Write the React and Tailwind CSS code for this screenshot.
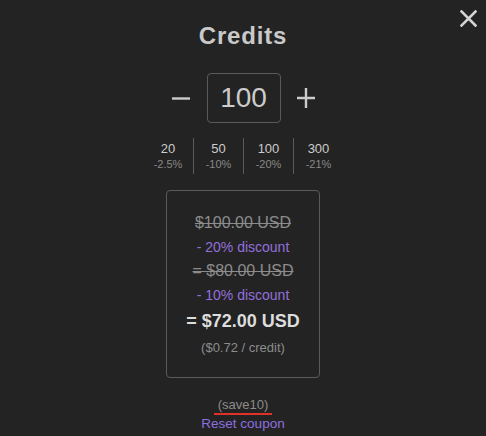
import React from "react";

const tiers = [
  { n: "20", p: "-2.5%" },
  { n: "50", p: "-10%" },
  { n: "100", p: "-20%" },
  { n: "300", p: "-21%" },
];

export default function App() {
  return (
    <div
      className="relative w-full h-[436px] bg-[#232323] flex flex-col items-center text-[#cccccc]"
      style={{ fontFamily: '"Liberation Sans", Arial, sans-serif' }}
    >
      <button className="absolute top-[10px] right-[9px] w-[17px] h-[17px]">
        <svg width="17" height="17" viewBox="0 0 17 17">
          <path d="M1.5 1.5 L15.5 15.5 M15.5 1.5 L1.5 15.5" stroke="#d4d4d4" strokeWidth="2.6" strokeLinecap="square" />
        </svg>
      </button>

      <div className="mt-[18px] h-[36px] leading-[36px] text-[24px] font-bold tracking-[0.8px] text-[#c9c9c9]">
        Credits
      </div>

      <div className="mt-[19px] flex items-center">
        <svg width="18" height="18" viewBox="0 0 18 18" className="mr-[17px]">
          <path d="M0 9.5 H18" stroke="#cccccc" strokeWidth="2.4" />
        </svg>
        <div className="w-[74px] h-[50px] border border-[#5a5a5a] rounded-[4px] flex items-center justify-center text-[28px] leading-none text-[#cccccc]">
          100
        </div>
        <svg width="18" height="20" viewBox="0 0 18 20" className="ml-[16px]">
          <path d="M0 10 H18 M9 0 V20" stroke="#cccccc" strokeWidth="2.4" />
        </svg>
      </div>

      <div className="mt-[15px] flex h-[36px]">
        {tiers.map((t, i) => (
          <div
            key={t.n}
            className={
              "w-[50px] h-full flex flex-col items-center justify-center " +
              (i > 0 ? "border-l border-[#5a5a5a]" : "")
            }
          >
            <div className="text-[13px] leading-[16px] text-[#cccccc]">{t.n}</div>
            <div className="text-[11px] leading-[14px] text-[#888888]">{t.p}</div>
          </div>
        ))}
      </div>

      <div className="mt-[16px] w-[154px] h-[188px] border border-[#5a5a5a] rounded-[4px] flex flex-col items-center pt-[20px]">
        <div className="h-[24px] leading-[24px] text-[16px] text-[#8c8c8c] line-through">$100.00 USD</div>
        <div className="h-[24px] leading-[24px] text-[14px] text-[#9370db]">- 20% discount</div>
        <div className="h-[24px] leading-[24px] text-[16px] text-[#8c8c8c] line-through">= $80.00 USD</div>
        <div className="h-[24px] leading-[24px] text-[14px] text-[#9370db]">- 10% discount</div>
        <div className="h-[28px] leading-[28px] text-[18px] font-bold text-[#dddddd]">= $72.00 USD</div>
        <div className="h-[26px] leading-[26px] text-[13px] text-[#8c8c8c]">($0.72 / credit)</div>
      </div>

      <div className="mt-[18px] inline-block px-[4px] h-[19px] leading-[17px] text-[13px] text-[#8c8c8c] border-b-2 border-[#e0302a]">
        (save10)
      </div>
      <div className="h-[18px] leading-[18px] text-[13.5px] text-[#8f6fe0]">Reset coupon</div>
    </div>
  );
}
